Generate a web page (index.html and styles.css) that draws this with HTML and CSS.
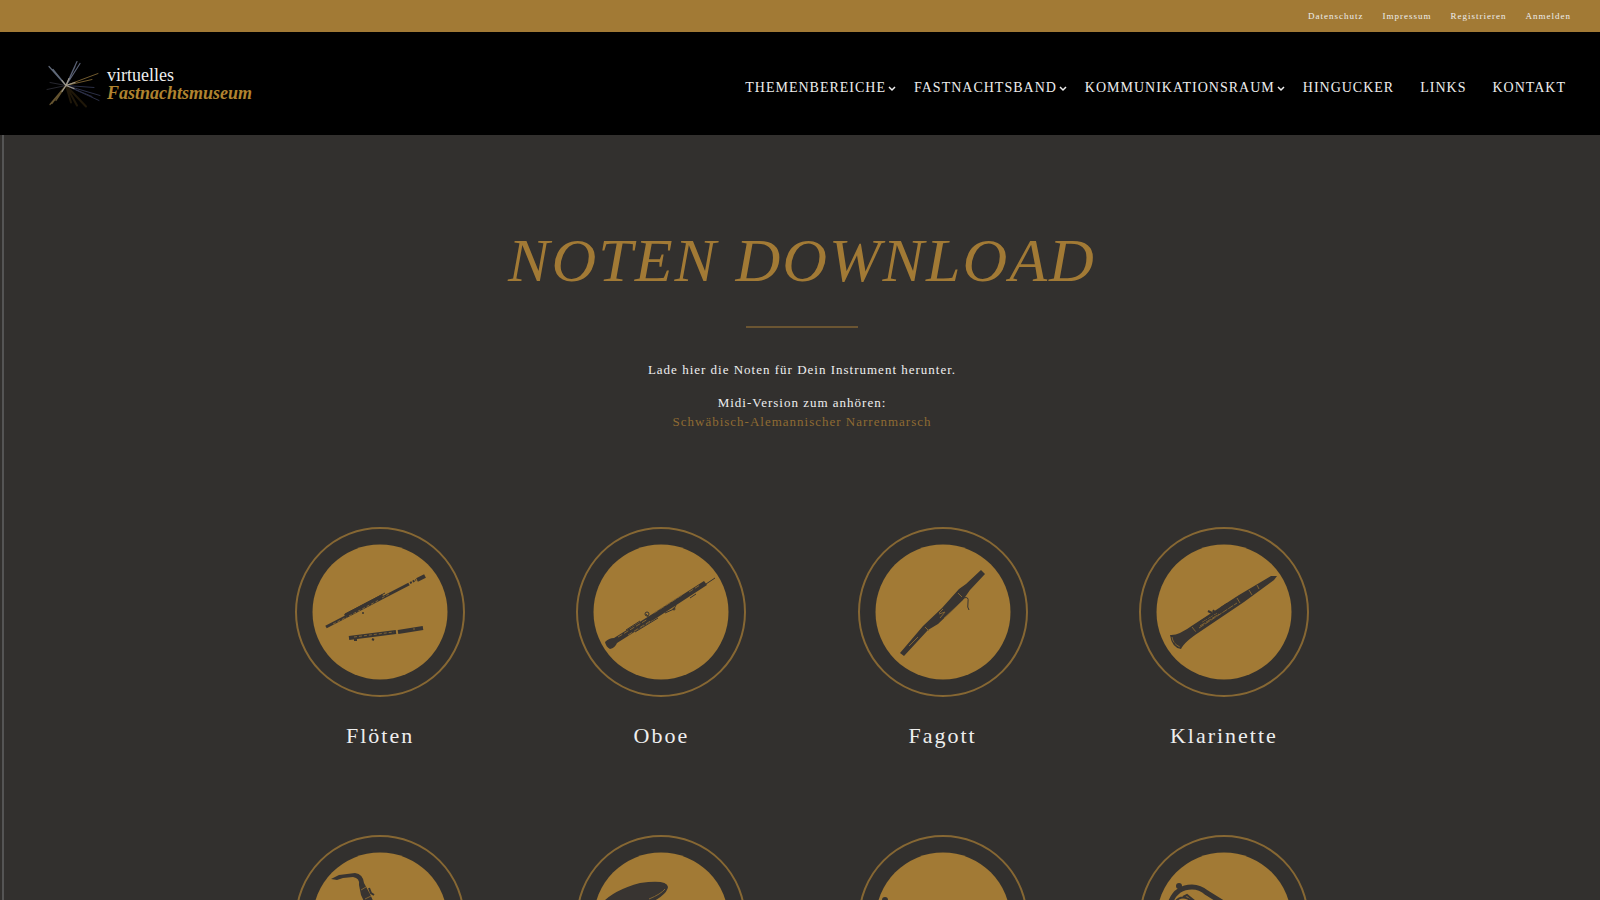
FILE: index.html
```html
<!DOCTYPE html>
<html lang="de">
<head>
    <meta charset="UTF-8">
    <meta name="viewport" content="width=device-width, initial-scale=1.0">
    <title>Noten Download - virtuelles Fastnachtsmuseum</title>
    <link rel="stylesheet" href="styles.css">
</head>
<body>
    <nav class="top-bar" aria-label="Service">
        <a href="#">Datenschutz</a>
        <a href="#">Impressum</a>
        <a href="#">Registrieren</a>
        <a href="#">Anmelden</a>
    </nav>

    <header class="header">
        <a class="logo" href="#">
            <svg class="logo-star" viewBox="0 0 60 50" aria-hidden="true">
                <g fill="none" stroke-linecap="round">
                    <path d="M22 27L5 8M22 27L9 11" stroke="#5f6878" stroke-width="1.2"/>
                    <path d="M22 27L33 3M22 27L36 5M22 27L31 8" stroke="#5a6175" stroke-width="1.2"/>
                    <path d="M22 27L54 15M22 27L48 21" stroke="#715a2e" stroke-width="1"/>
                    <path d="M22 27L50 29M22 27L56 37M22 27L55 42M22 27L48 38" stroke="#2b2f46" stroke-width="1"/>
                    <path d="M22 27L6 46M22 27L8 45M22 27L12 42" stroke="#64532f" stroke-width="1.2"/>
                    <path d="M22 27L6 24M22 27L3 31" stroke="#26262e" stroke-width="1"/>
                    <path d="M22 27L27 44M22 27L33 47M22 27L42 48" stroke="#1f1709" stroke-width="2"/>
                    <path d="M18 22L22 27L25 20M18 33L22 27L31 24M22 27L30 30" stroke="#a09a8c" stroke-width="1.2"/>
                </g>
            </svg>
            <span class="logo-text">virtuelles<br><em>Fastnachtsmuseum</em></span>
        </a>
        <nav class="main-nav" aria-label="Hauptmenü">
            <a class="has-menu" href="#">Themenbereiche<svg viewBox="0 0 8 6" aria-hidden="true"><path d="M1 1l3 3 3-3"/></svg></a>
            <a class="has-menu" href="#">Fastnachtsband<svg viewBox="0 0 8 6" aria-hidden="true"><path d="M1 1l3 3 3-3"/></svg></a>
            <a class="has-menu" href="#">Kommunikationsraum<svg viewBox="0 0 8 6" aria-hidden="true"><path d="M1 1l3 3 3-3"/></svg></a>
            <a href="#">Hingucker</a>
            <a href="#">Links</a>
            <a href="#">Kontakt</a>
        </nav>
    </header>

    <main class="content">
        <h1>Noten Download</h1>
        <hr class="divider">
        <p>Lade hier die Noten für Dein Instrument herunter.</p>
        <p>Midi-Version zum anhören:<br><a href="#">Schwäbisch-Alemannischer Narrenmarsch</a></p>

        <div class="instruments">
            <a class="instrument" href="#">
                <svg viewBox="0 0 170 170" aria-hidden="true">
                    <circle class="ring" cx="85" cy="85" r="84"/>
                    <circle class="disc" cx="85" cy="85" r="67.5"/>
                    <path class="line" d="M31 100L114 57" stroke-width="3"/>
                    <path class="line" d="M50 89L88 69" stroke-width="4"/>
                    <path class="line" d="M122 53L130 49" stroke-width="4"/>
                    <path class="line" d="M115 56L121 53" stroke-width="2" stroke-dasharray="2 1"/>
                    <path class="line" d="M50 87L90 66" stroke-width="1"/>
                    <path class="shine" d="M38 97L52 90M54 89L84 73M87 71L94 67" stroke-dasharray="3 2"/>
                    <circle class="part" cx="68" cy="86" r="1"/>
                    <path class="line" d="M54 111L101 105M103 105L128 101" stroke-width="4"/>
                    <path class="shine" d="M59 110L99 105" stroke-dasharray="3 2"/>
                    <path class="shine" d="M118 102h2"/>
                    <path class="line" d="M59 113h3M77 112l2 1" stroke-width="2"/>
                </svg>
                <h2>Flöten</h2>
            </a>
            <a class="instrument" href="#">
                <svg viewBox="0 0 170 170" aria-hidden="true">
                    <circle class="ring" cx="85" cy="85" r="84"/>
                    <circle class="disc" cx="85" cy="85" r="67.5"/>
                    <path class="part" d="M29 115q4-4 9-4L78 86L128 54l3 4L82 90L41 116q-2 5-7 6q-4-2-5-7z"/>
                    <path class="line" d="M130 57L139 51" stroke-width="1"/>
                    <path class="shine" d="M42 110L72 92M52 108L76 93M78 86L106 68M113 65L124 58" stroke-dasharray="5 2"/>
                    <path class="line" d="M50 103L64 94M59 105L82 91" stroke-width="1"/>
                    <path class="line" d="M73 91l-3-4M89 86l9-4 2-4M114 71l6-4" stroke-width="1"/>
                    <circle class="line" cx="71" cy="87" r="2" stroke-width="1"/>
                    <circle class="line" cx="98" cy="82" r="1" stroke-width="1"/>
                </svg>
                <h2>Oboe</h2>
            </a>
            <a class="instrument" href="#">
                <svg viewBox="0 0 170 170" aria-hidden="true">
                    <circle class="ring" cx="85" cy="85" r="84"/>
                    <circle class="disc" cx="85" cy="85" r="67.5"/>
                    <path class="part" d="M42 126L65 99L84 81L101 62L108 57L123 43L127 47L112 63L105 73L80 97L70 103L46 129z"/>
                    <path class="shine" d="M51 119L60 110M67 100l4 4M81 87l6-2-5 6M86 91l15-14M100 66l4 4M85 82l-4 4"/>
                    <path class="line" d="M83 93L106 71q5-2 4 4t1 8" stroke-width="1"/>
                </svg>
                <h2>Fagott</h2>
            </a>
            <a class="instrument" href="#">
                <svg viewBox="0 0 170 170" aria-hidden="true">
                    <circle class="ring" cx="85" cy="85" r="84"/>
                    <circle class="disc" cx="85" cy="85" r="67.5"/>
                    <path class="part" d="M31 108q8 1 23-10L100 68L132 49l6 0-3 4L105 75L62 104q-17 11-20 18q-9-1-11-14z"/>
                    <path class="shine" d="M33 110q1 7 8 10M53 100l4 5M61 99L80 87M63 95L78 86M98 71l3 5M110 63l3 5M118 58l2 4M60 101L98 76" stroke-dasharray="6 1"/>
                    <path class="line" d="M61 95L81 83M82 81l6-4 5 0M73 86l-4-2M74 85l1-2" stroke-width="2"/>
                </svg>
                <h2>Klarinette</h2>
            </a>
            <a class="instrument" href="#" aria-label="Saxophon">
                <svg viewBox="0 0 170 170" aria-hidden="true">
                    <circle class="ring" cx="85" cy="85" r="84"/>
                    <circle class="disc" cx="85" cy="85" r="67.5"/>
                    <path class="part" d="M36 44L44 40L60 38q8 1 9 10L75 59L100 115L93 117L66 60L64 50Q65 43 58 42L48 43L42 45z"/>
                    <path class="shine" d="M66 55l5-3M70 64l6-3M73 71l6-3"/>
                    <path class="line" d="M74 53l2 5 3 2" stroke-width="2"/>
                    <path class="line" d="M96 112q8 20 18 6L124 82" stroke-width="10"/>
                </svg>
            </a>
            <a class="instrument" href="#" aria-label="Tenorhorn">
                <svg viewBox="0 0 170 170" aria-hidden="true">
                    <circle class="ring" cx="85" cy="85" r="84"/>
                    <circle class="disc" cx="85" cy="85" r="67.5"/>
                    <path class="part" d="M26 68Q38 55 64 48Q91 44 92 52Q91 61 66 72L100 125H70L56 76Q32 80 26 68z"/>
                    <path class="shine" d="M73 64Q85 59 89 54"/>
                </svg>
            </a>
            <a class="instrument" href="#" aria-label="Trompete">
                <svg viewBox="0 0 170 170" aria-hidden="true">
                    <circle class="ring" cx="85" cy="85" r="84"/>
                    <circle class="disc" cx="85" cy="85" r="67.5"/>
                    <circle class="part" cx="27" cy="65" r="3"/>
                    <path class="line" d="M27 67L125 108" stroke-width="5"/>
                    <path class="line" d="M58 80v26q1 8 9 7l25 3q9-1 9-8V98" stroke-width="4"/>
                </svg>
            </a>
            <a class="instrument" href="#" aria-label="Waldhorn">
                <svg viewBox="0 0 170 170" aria-hidden="true">
                    <circle class="ring" cx="85" cy="85" r="84"/>
                    <circle class="disc" cx="85" cy="85" r="67.5"/>
                    <circle class="part" cx="40" cy="51" r="3"/>
                    <path class="line" d="M32 66Q38 52 53 52Q61 52 68 58L110 84" stroke-width="5"/>
                    <path class="line" d="M40 52l3 3M36 67Q43 58 54 67M44 62l4-2 10 8" stroke-width="2"/>
                    <circle class="line" cx="82" cy="100" r="23" stroke-width="5"/>
                </svg>
            </a>
        </div>
    </main>
</body>
</html>
```
FILE: styles.css
```css
* {
    box-sizing: border-box;
}

body {
    margin: 0;
    background-color: #32302e;
    color: #eee;
    font-family: "Liberation Serif", "Times New Roman", serif;
    font-size: 13px;
    letter-spacing: 1px;
}

a {
    color: inherit;
    text-decoration: none;
}

.top-bar {
    display: flex;
    justify-content: flex-end;
    gap: 19px;
    padding: 0 29px;
    background-color: #a27a35;
    font-size: 9px;
    line-height: 32px;
}

.header {
    display: flex;
    justify-content: space-between;
    align-items: center;
    padding: 24px 34px 24px 44px;
    background-color: #000;
}

.logo {
    display: flex;
    align-items: center;
    gap: 3px;
    font-size: 18px;
    line-height: 18px;
    letter-spacing: 0;
}

.logo-star {
    width: 60px;
    height: 55px;
}

.logo-text em {
    color: #b0832f;
    font-weight: bold;
}

.main-nav {
    display: flex;
    gap: 26px;
    padding-top: 8px;
    font-size: 14px;
    text-transform: uppercase;
}

.has-menu {
    margin-right: -8px;
}

.main-nav svg {
    width: 8px;
    height: 6px;
    margin-left: 2px;
    fill: none;
    stroke: #eee;
    stroke-width: 1.5;
}

.content {
    margin-left: 2px;
    padding-top: 90px;
    border-left: 2px solid #555;
    text-align: center;
}

h1 {
    margin: 0;
    color: #a27a35;
    font-size: 62px;
    font-style: italic;
    font-weight: normal;
    line-height: 70px;
    letter-spacing: 2px;
    text-transform: uppercase;
}

.divider {
    width: 112px;
    margin: 31px auto 32px;
    border: 0;
    border-top: 2px solid #6b5532;
}

.content p {
    margin: 0 0 14px;
    line-height: 19px;
}

.content p a {
    color: #8f6b33;
}

.instruments {
    display: grid;
    grid-template-columns: repeat(4, 1fr);
    row-gap: 82px;
    max-width: 1125px;
    margin: 96px auto 0;
}

.instrument svg {
    display: block;
    width: 170px;
    height: 170px;
    margin: 0 auto;
}

.instrument h2 {
    margin: 22px 0 0;
    font-size: 22px;
    font-weight: normal;
    line-height: 34px;
    letter-spacing: 2px;
}

.ring {
    fill: none;
    stroke: #866733;
    stroke-width: 2;
}

.disc {
    fill: #a27a35;
}

.part {
    fill: #383431;
}

.line {
    fill: none;
    stroke: #383431;
}

.shine {
    fill: none;
    stroke: #806332;
    stroke-width: 1;
}
```
